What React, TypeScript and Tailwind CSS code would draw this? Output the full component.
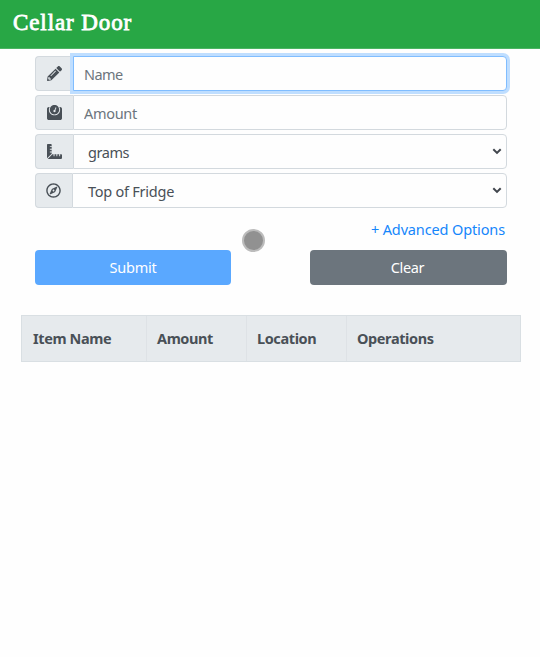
import React from "react";
import { FaPencilAlt, FaWeight, FaRulerCombined, FaRegCompass } from "react-icons/fa";

const font = "font-['Noto_Sans','Open_Sans',sans-serif]";

function Addon({ children, narrow }: { children: React.ReactNode; narrow?: boolean }) {
  return (
    <span
      className={`flex h-[35px] shrink-0 items-center justify-center rounded-l-[4px] border border-r-0 border-[#d3d9de] bg-[#e6eaed] pr-[1px] text-[15px] text-[#495057] ${narrow ? "w-[37px]" : "w-[38px]"}`}
    >
      {children}
    </span>
  );
}

function SelectBox({ label, className }: { label: string; className: string }) {
  return (
    <button
      type="button"
      className="flex h-[35px] flex-1 items-center justify-between rounded-r-[4px] border border-[#d3d9de] bg-[#fefefe] pl-[14px] pr-[4px] text-[#495057]"
    >
      <span className={className}>{label}</span>
      <svg className="-mt-[1px]" width="10" height="7" viewBox="0 0 10 7" fill="none" stroke="#41464d" strokeWidth="2">
        <path d="M1.3 1.2 5 4.9 8.7 1.2" />
      </svg>
    </button>
  );
}

export default function App() {
  return (
    <div className={`relative h-[657px] w-[540px] overflow-hidden bg-[#fefefe] text-[14.5px] leading-[22px] ${font}`}>
      <header className="flex h-[49px] items-start border-b border-[#4bb562] bg-[#28a745] pl-[13px] pt-[9px]">
        <h1 className="whitespace-nowrap font-['Liberation_Serif',serif] text-[23px] font-normal leading-[27px] tracking-[0.9px] text-white [-webkit-text-stroke:0.8px_white]">
          Cellar Door
        </h1>
      </header>

      <form className="flex flex-col gap-[4px] pl-[35px] pr-[33px] pt-[7px]">
        <div className="flex">
          <Addon><FaPencilAlt /></Addon>
          <input
            placeholder="Name"
            className="h-[35px] min-w-0 flex-1 rounded-r-[4px] border border-[#80bdff] bg-[#fefefe] pl-[10px] tracking-[-0.6px] shadow-[0_0_0_3px_#bfdeff] outline-none placeholder:text-[#6c757d]"
          />
        </div>
        <div className="flex">
          <Addon><FaWeight /></Addon>
          <input
            placeholder="Amount"
            className="h-[35px] min-w-0 flex-1 rounded-r-[4px] border border-[#d3d9de] bg-[#fefefe] pl-[10px] tracking-[-0.3px] outline-none placeholder:text-[#6c757d]"
          />
        </div>
        <div className="flex">
          <Addon><FaRulerCombined /></Addon>
          <SelectBox label="grams" className="tracking-[-0.45px]" />
        </div>
        <div className="flex">
          <Addon narrow><FaRegCompass /></Addon>
          <SelectBox label="Top of Fridge" className="pl-[1px] tracking-[-0.25px]" />
        </div>
        <div className="flex h-[38px] justify-end pr-[2px] pt-[6px]">
          <a className="whitespace-nowrap tracking-[-0.13px] text-[#1586fb]">+ Advanced Options</a>
        </div>
        <div className="-mt-[4px] flex justify-between">
          <button type="button" className="h-[35px] w-[196px] rounded-[4px] bg-[#5aa8ff] pb-[2px] tracking-[-0.2px] text-white">
            Submit
          </button>
          <button type="button" className="h-[35px] w-[197px] rounded-[4px] bg-[#6c757d] pb-[2px] pr-[2px] tracking-[-0.35px] text-white">
            Clear
          </button>
        </div>
      </form>

      <div className="ml-[21px] mt-[30px] grid h-[47px] w-[500px] grid-cols-[125px_100px_100px_1fr] border border-[#d9dfe3] bg-[#e6eaed] font-bold tracking-[-0.4px] text-[#495057]">
        <div className="flex items-center border-r border-[#dee2e6] pb-[2px] pl-[11px]">Item Name</div>
        <div className="flex items-center border-r border-[#dee2e6] pb-[2px] pl-[10px]">Amount</div>
        <div className="flex items-center border-r border-[#dee2e6] pb-[2px] pl-[10px]">Location</div>
        <div className="flex items-center pb-[2px] pl-[10px]">Operations</div>
      </div>

      <div className="absolute left-[242px] top-[229px] h-[23px] w-[23px] rounded-full border-2 border-[#bcbcbc] bg-[#919191]" />
    </div>
  );
}
